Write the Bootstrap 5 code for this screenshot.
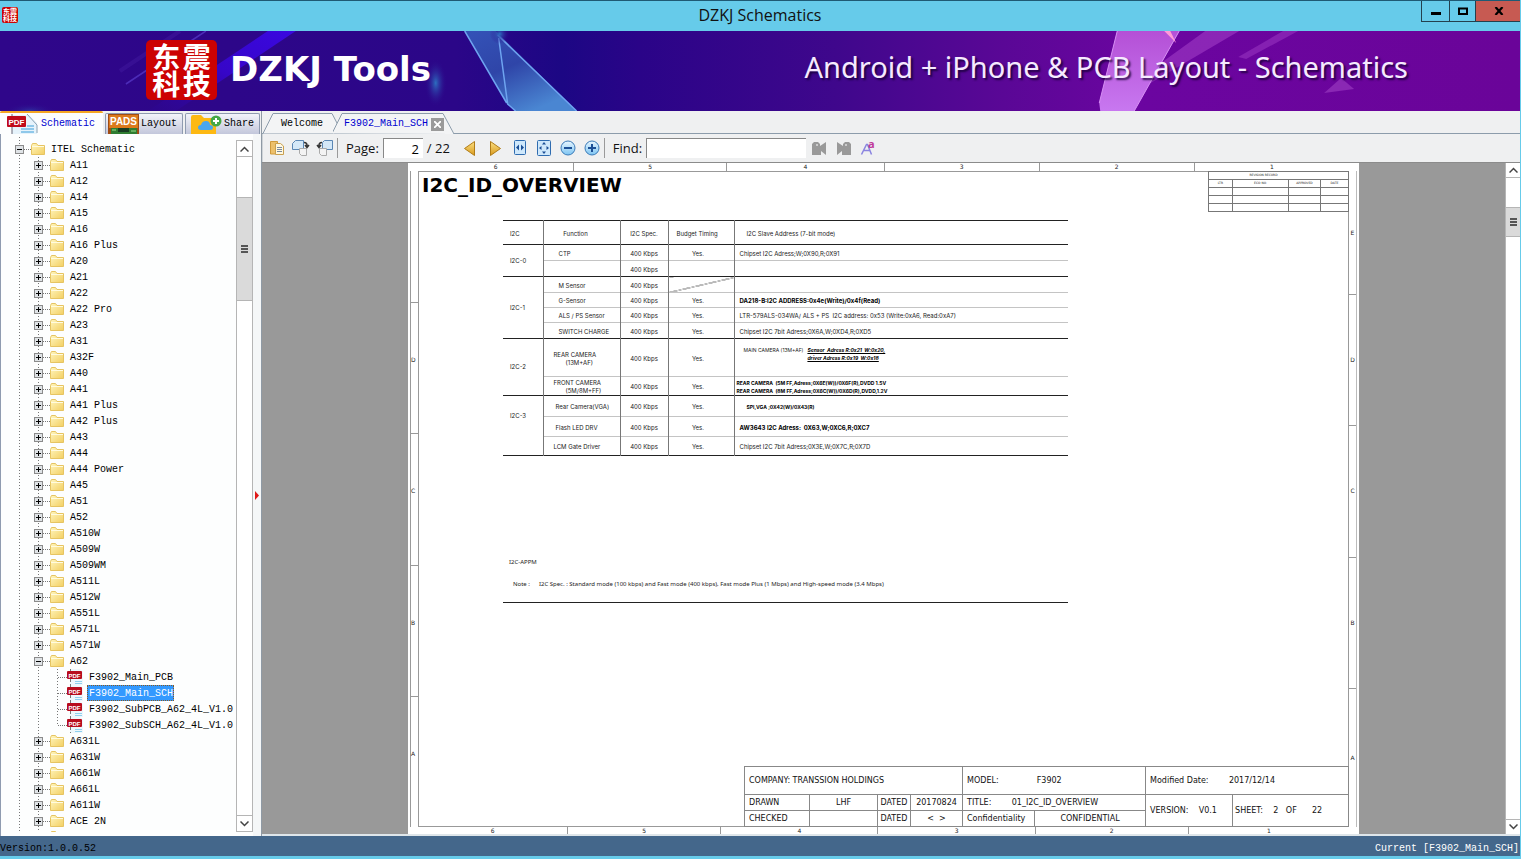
<!DOCTYPE html>
<html lang="en">
<head>
<meta charset="utf-8">
<meta name="viewport" content="width=device-width, initial-scale=1">
<title>DZKJ Schematics</title>
<link href="https://cdn.jsdelivr.net/npm/bootstrap@5.3.0/dist/css/bootstrap.min.css" rel="stylesheet">
<style>
  body { font-family: "Liberation Mono", "Noto Sans CJK SC", monospace; font-size: 10px; line-height: 16px; color: #000; background: #eff0f1; }
  button { border: 0; background: none; padding: 0; color: inherit; font: inherit; }
  a { color: inherit; text-decoration: none; }
  svg { display: block; flex: none; }
  .app { height: 100vh; border-right: 1px solid #66cbea; border-bottom: 3px solid #66cbea; }

  /* window title */
  .titlebar { display: grid; grid-template-columns: 1fr auto 1fr; height: 31px; background: #66cbea; border-top: 1px solid #1f5a74; }
  .titlebar h1 { font: 16px/28px "Open Sans", "Noto Sans", sans-serif; margin: 0; color: #111; }
  .seal { display: grid; grid-template-columns: 1fr 1fr; background: #cc0202; color: #fff; font-family: "Noto Sans CJK SC", sans-serif; font-weight: 700; text-align: center; }
  .seal-sm { width: 16px; height: 16px; margin: 6px 2px; border-radius: 2px; font-size: 7px; line-height: 7px; padding: 1px; }
  .seal-lg { width: 71px; height: 60px; border-radius: 5px; font-size: 28px; line-height: 26px; padding: 3px 5px; margin-bottom: 2px; }
  .winbtn { height: 21px; width: 28px; border: 1px solid #24404e; border-top: 0; border-right: 0; display: grid; place-items: center; }
  .winbtn.close-win { width: 46px; background: #c75a52; margin-right: -1px; }
  .winbtn.max { width: 26px; }

  /* banner */
  .banner { height: 80px; position: relative; background: #2d0689; color: #fff; padding-left: 146px; padding-right: 112px; overflow: hidden; }
  .banner > svg { position: absolute; inset: 0; width: 100%; height: 100%; }
  .banner > :not(svg) { position: relative; }
  .brand-name { font: 700 34px/40px "DejaVu Sans", sans-serif; margin-left: 13px; margin-bottom: 4px; white-space: nowrap; }
  .tagline { font: 29px/40px "Noto Sans", sans-serif; text-shadow: 2px 2px 2px rgba(20,0,50,.8); color: #f6eaff; margin-bottom: 8px; white-space: nowrap; }

  /* left side */
  .side { width: 262px; border-right: 1px solid #8f9aa5; }
  .side-tabs { height: 23px; }
  .side-tab { height: 21px; padding: 0 5px 0 2px; gap: 2px; border: 1px solid #8f9bb0; border-bottom: 0; background: linear-gradient(#f3f4fa, #c3c7db); margin-right: 2px; border-radius: 2px 2px 0 0; line-height: 20px; }
  .side-tab.active { height: 23px; background: #fdfefe; border: 0; border-top: 2px solid #f5a623; color: #0000d0; padding: 0 8px 0 7px; gap: 3px; }
  .side-body { background: #fdfefe; min-height: 0; border-left: 1px solid #8f9bb0; }
  .tree-pane { margin: 3px 0 4px; padding-top: 4px; overflow: hidden; min-width: 0; background: repeating-linear-gradient(#777 0 1px, transparent 1px 3px) 18px 0 / 1px 100% no-repeat; }
  .tree-pane ul { list-style: none; margin: 0; padding: 0; }
  .node { height: 16px; display: flex; align-items: center; white-space: nowrap; }
  .node .dots { height: 1px; width: 7px; flex: none; background: repeating-linear-gradient(90deg, #777 0 1px, transparent 1px 2px); }
  .lvl0 { padding-left: 14px; }
  .lvl1 { padding-left: 33px; }
  .lvl2 { padding-left: 57px; }
  .lvl2 .dots { width: 9px; }
  .line1 { background: repeating-linear-gradient(#777 0 1px, transparent 1px 3px) 37px 0 / 1px 100% no-repeat; }
  .line2 { background: repeating-linear-gradient(#777 0 1px, transparent 1px 3px) 56px 0 / 1px 56px no-repeat; }
  .exp { width: 9px; height: 9px; border: 1px solid #8b8b8b; background: linear-gradient(#000,#000) center/5px 1px no-repeat, #dfe3e6; flex: none; }
  .exp.plus { background: linear-gradient(#000,#000) center/5px 1px no-repeat, linear-gradient(#000,#000) center/1px 5px no-repeat, #dfe3e6; }
  .node a { margin-left: 5px; padding: 0 1px; height: 16px; line-height: 18px; }
  .lvl2 a { margin-left: 4px; padding-left: 2px; }
  .node a.sel { background: #3399ff; color: #fff; outline: 1px dotted #8a5a20; outline-offset: -1px; }
  .vscroll { width: 17px; border: 1px solid #b5b5b5; background: #fff; margin: 6px 0 4px; }
  .vscroll .arr { height: 16px; width: 100%; display: grid; place-items: center; flex: none; }
  .vscroll .arr.up { border-bottom: 1px solid #b5b5b5; }
  .vscroll .arr.down { border-top: 1px solid #b5b5b5; }
  .vscroll.doc { width: 15px; margin: 0; border-width: 0 0 0 1px; }
  .vscroll.doc .arr { height: 15px; }
  .thumb { background: #dadada; border-top: 1px solid #b5b5b5; border-bottom: 1px solid #b5b5b5; display: grid; place-items: center; width: 100%; }
  .grip { width: 7px; height: 8px; background: repeating-linear-gradient(#555 0 2px, transparent 2px 3px); }
  .split { width: 8px; background: #f5f7f8; display: grid; align-items: center; padding: 20px 0 0 1px; }

  /* document tabs and tool bar */
  .doc-tabs { height: 23px; border-bottom: 1px solid #8c9cab; }
  .doc-tab { position: relative; height: 23px; display: flex; align-items: center; padding-top: 3px; text-align: left; white-space: nowrap; }
  .doc-tab svg.edge { position: absolute; left: 0; top: 1px; }
  .doc-tab span, .doc-tab .x { position: relative; }
  .doc-tab .x { width: 13px; height: 13px; background: #9a9a9a; display: grid; place-items: center; margin-left: 3px; }
  .tab-welcome { width: 71px; padding-left: 19px; }
  .tab-file { width: 122px; padding-left: 11px; color: #0000d0; }
  .tools { height: 28px; padding-left: 6px; font: 13px/20px "Open Sans", "Noto Sans", sans-serif; color: #111; border-left: 1px solid #cfd4d8; }
  .tools .icon-btn { width: 24px; height: 24px; display: grid; place-items: center; flex: none; }
  .tools .wide { width: 26px; }
  .tools .slim { width: 16px; }
  .vsep { width: 1px; height: 20px; background: #9a9a9a; }
  .field { height: 20px; border: 0; border-top: 1px solid #888; border-left: 1px solid #888; background: #fff; padding: 0 4px; font: inherit; text-align: right; border-radius: 0; }
  .field-page { width: 40px; }
  .field-find { width: 160px; text-align: left; }

  /* document */
  .viewer { background: #999; border-top: 1px solid #8b8b8b; min-height: 0; overflow: hidden; }
  .sheet { width: 951px; background: #fff; color: #222; font: 6px/8px "DejaVu Sans", sans-serif; display: grid; grid-template-columns: 10px 1fr 10px; grid-template-rows: 8px 1fr 7px; }
  .rule { display: grid; min-height: 0; text-align: center; }
  .rule i { font-style: normal; border: 0 solid #999; display: grid; place-items: center; }
  .rule.top { grid-template-columns: 155fr 153fr 157fr 155fr 155fr 155fr; }
  .rule.bottom { grid-template-columns: 149fr 153fr 157fr 157fr 153fr 161fr; }
  .rule.left { grid-template-rows: 131fr 131fr 131fr 131fr 131fr; margin-left: 2px; border-left: 1px solid #999; }
  .rule.right { grid-template-rows: 123fr 131fr 131fr 131fr 139fr; margin-right: 2px; border-right: 1px solid #bbb; }
  .rule.left i { padding-bottom: 16px; justify-items: start; }
  .rule.top i + i, .rule.bottom i + i { border-left-width: 1px; }
  .rule.left i + i, .rule.right i + i { border-top-width: 1px; }
  .frame { border: 1px solid #999; }
  .frame h2 { font: 700 20px/24px "DejaVu Sans", sans-serif; color: #000; margin: 1px 0 0 3px; }
  .sheet table { border-collapse: collapse; table-layout: fixed; }
  .sheet td, .sheet th { font-weight: 400; padding: 0; overflow: hidden; white-space: nowrap; }
  .rev { width: 140px; font-size: 3px; line-height: 5px; margin: -1px -1px 0 0; }
  .rev td, .rev th { border: 1px solid #777; height: 8px; text-align: center; }
  .rev .cap { padding-right: 30px; }
  .i2c { width: 565px; margin: 8px 0 0 84px; font-family: Inter, "Noto Sans", sans-serif; border-bottom: 1px solid #222; }
  .i2c tr { border-top: 1px solid #c4c4c4; }
  .i2c tr.sec, .i2c th[scope=rowgroup] { border-top: 1px solid #222; }
  .i2c td, .i2c thead th { border-left: 1px solid #777; }
  .i2c tbody td { padding-top: 2px; }
  .i2c thead th:first-child { border-left: 0; }
  .i2c th { text-align: left; padding-left: 7px; }
  .i2c thead th { padding-top: 3px; }
  .i2c thead .mid { padding-left: 0; text-align: center; }
  .i2c thead .fnh { padding-right: 12px; }
  .i2c thead .late { padding-left: 12px; }
  .i2c thead .bt { padding-left: 8px; }
  .i2c .fn { padding-left: 12px; }
  .i2c .fn1 { padding-left: 15px; }
  .i2c .fn2 { padding-left: 10px; }
  .i2c .fn2 span { padding-left: 12px; }
  .i2c .sp { text-align: center; }
  .i2c .yes { text-align: center; padding-right: 6px; }
  .i2c .ad { padding-left: 5px; }
  .i2c tbody .in1 { padding: 7px 0 0 9px; vertical-align: top; font-size: 5px; }
  .i2c tbody .in0 { padding: 2px 0 0 2px; font-size: 5px; font-weight: 700; color: #000; }
  .i2c tbody .in2 { padding-left: 12px; }
  .i2c .strong { font-weight: 700; color: #000; }
  .diag { background: linear-gradient(to bottom right, transparent 49%, #777 49%, #777 52%, transparent 52%); }
  .note { margin-left: 90px; font-family: "Noto Sans", sans-serif; }
  .note-end { border-bottom: 1px solid #222; width: 565px; margin-left: 84px; height: 15px; }
  .tblock { width: 605px; font-size: 8px; line-height: 10px; margin: 0 -1px -1px 0; color: #111; }
  .tblock td { border: 1px solid #888; padding: 0 4px; height: 16px; white-space: pre; }
  .tblock tr:first-child td { height: 28px; }

  .under { height: 2px; background: #dfe6ea; }
  .status { height: 20px; background: #44678b; line-height: 14px; padding-right: 1px; color: #fff; }
  .status .ver { color: #000; }
</style>
</head>
<body>

<svg width="0" height="0" class="position-absolute" aria-hidden="true">
  <defs>
    <linearGradient id="gFold" x1="0" y1="0" x2="1" y2="1"><stop offset="0" stop-color="#fff6bf"/><stop offset="1" stop-color="#f3cf62"/></linearGradient>
    <linearGradient id="gGold" x1="0" y1="0" x2="0" y2="1"><stop offset="0" stop-color="#fbe084"/><stop offset="1" stop-color="#d99a1c"/></linearGradient>
    <linearGradient id="gBlue" x1="0" y1="0" x2="0" y2="1"><stop offset="0" stop-color="#e8f6ff"/><stop offset="1" stop-color="#7cc4f2"/></linearGradient>
    <symbol id="folder" viewBox="0 0 14 13"><path d="M.5 2.500V11.500H13.500V2.500H7L5.500.5H1.500Z" fill="url(#gFold)" stroke="#e6c462"/><path d="M1 3.500H13" stroke="#fffbe0"/></symbol>
    <symbol id="pdf" viewBox="0 0 16 16"><path d="M3 0h10l3 3v13H3z" fill="#eef7fc"/><path d="M3.500 0v16" stroke="#777" stroke-dasharray="3 2"/><path d="M8 12.500h7M8 14.500h7" stroke="#8fd0ee"/><rect y="2" width="15" height="8" rx="1" fill="#b80d1e"/><text x="7.500" y="8.500" font-family="Liberation Sans" font-weight="700" font-size="6" fill="#fff" text-anchor="middle">PDF</text></symbol>
  </defs>
</svg>

<div class="app d-flex flex-column overflow-hidden">
  <header class="titlebar flex-shrink-0">
    <div class="seal seal-sm" aria-hidden="true"><span>东</span><span>震</span><span>科</span><span>技</span></div>
    <h1>DZKJ Schematics</h1>
    <div class="d-flex justify-content-end">
      <button class="winbtn" aria-label="Minimize"><svg width="12" height="10"><path d="M1 7.500h10" stroke="#000" stroke-width="3"/></svg></button>
      <button class="winbtn max" aria-label="Maximize"><svg width="10" height="8"><path d="M1 1.500h8v5.500h-8z" fill="none" stroke="#000" stroke-width="2"/></svg></button>
      <button class="winbtn close-win" aria-label="Close"><svg width="10" height="8"><path d="M1.500 0l7 8M8.500 0l-7 8" stroke="#000" stroke-width="2.200"/></svg></button>
    </div>
  </header>

  <div class="banner d-flex align-items-center flex-shrink-0">
    <svg viewBox="0 0 1521 80" preserveAspectRatio="none" aria-hidden="true">
      <defs>
        <linearGradient id="bg"><stop offset="0" stop-color="#2f068a"/><stop offset=".3" stop-color="#2b0688"/><stop offset=".37" stop-color="#1c0784"/><stop offset=".42" stop-color="#2a0488"/><stop offset=".55" stop-color="#3f078c"/><stop offset=".66" stop-color="#5a0796"/><stop offset=".75" stop-color="#6b05a0"/><stop offset="1" stop-color="#6a0499"/></linearGradient>
        <linearGradient id="shard" x1="0" y1="0" x2=".6" y2="1"><stop offset="0" stop-color="#3453b8"/><stop offset=".5" stop-color="#2f45a8"/><stop offset="1" stop-color="#4a86d2"/></linearGradient>
        <linearGradient id="pink" x1="0" y1="0" x2="0" y2="1"><stop offset="0" stop-color="#b450d6"/><stop offset="1" stop-color="#c878f0"/></linearGradient>
        <linearGradient id="band" x1="1" y1="0" x2="0" y2="1"><stop offset="0" stop-color="#3a08e0"/><stop offset=".5" stop-color="#3606c8"/><stop offset="1" stop-color="#2d0690" stop-opacity=".3"/></linearGradient>
        <radialGradient id="glow"><stop offset="0" stop-color="#2d6ec0"/><stop offset="1" stop-color="#2d0689" stop-opacity="0"/></radialGradient>
      </defs>
      <rect width="1521" height="80" fill="url(#bg)"/>
      <path d="M268 0h28L176 80h-28z" fill="url(#band)"/>
      <path d="M206 0l-80 53" stroke="#5a3ccc" stroke-width="1.500" opacity=".7"/>
      <path d="M180 0l-60 40" stroke="#4a22a8" stroke-width="4" opacity=".35"/>
      <ellipse cx="436" cy="52" rx="11" ry="24" fill="url(#glow)"/>
      <ellipse cx="30" cy="80" rx="26" ry="8" fill="url(#glow)" opacity=".4"/>
      <path d="M465 0h31l81 80h-62l-8-8z" fill="url(#shard)"/>
      <path d="M465 0l42 72M499 7l9 66 8 7M498 4l79 76" stroke="#6ea4f0" stroke-width="1.500" fill="none"/>
      <circle cx="500" cy="3" r="10" fill="url(#glow)"/>
      <path d="M1206 0h34l-92 54-14-2z" fill="#a03cc6" opacity=".6"/>
      <path d="M1284 0h15l-52 28-8-2z" fill="#a03cc6" opacity=".5"/>
      <path d="M1118 0h62l-45 80h-34l-1-8z" fill="url(#pink)"/>
      <path d="M1118 0l-18 72M1180 0l-45 80" stroke="#d890f4" fill="none"/>
      <path d="M1165 0l12 12-6-12z" fill="#ff9ad8"/>
      <path d="M1325 62l17-15 13 11z" fill="#8a28b4"/>
    </svg>
    <div class="seal seal-lg"><span>东</span><span>震</span><span>科</span><span>技</span></div>
    <div class="brand-name">DZKJ Tools</div>
    <div class="tagline ms-auto">Android + iPhone &amp; PCB Layout - Schematics</div>
  </div>

  <main class="d-flex flex-grow-1 overflow-hidden">
    <aside class="side d-flex flex-column flex-shrink-0">
      <div class="side-tabs d-flex align-items-end" role="tablist">
        <button class="side-tab active d-flex align-items-center" role="tab" aria-selected="true">
          <svg width="31" height="20" viewBox="0 0 31 20"><path d="M5 1h17l8 8v11H5z" fill="#e6f3fb"/><path d="M20 0l10 11v8" fill="none" stroke="#8aa0b0"/><path d="M5 13v7M5 3V0" stroke="#667"/><path d="M14 15h13M14 18h13M20 12h7" stroke="#8fc8ea" stroke-width="2"/><rect y="2" width="19" height="11" rx="1" fill="#c00a1a"/><text x="9.500" y="11" font-family="Liberation Sans" font-weight="700" font-size="8" fill="#fff" text-anchor="middle">PDF</text></svg>
          Schematic</button>
        <button class="side-tab d-flex align-items-center" role="tab">
          <svg width="31" height="20" viewBox="0 0 31 20"><path d="M0 0h31v20H0z" fill="#a04c14"/><path d="M1 1h29v13H1z" fill="#dc7a1c"/><text x="15.500" y="11" font-family="Liberation Sans" font-weight="700" font-size="10" fill="#fff" text-anchor="middle">PADS</text><path d="M3 14h26v6H3z" fill="#2f7d32"/><path d="M10 14h11v4H10z" fill="#183c22"/><path d="M4 16h4M23 17h5" stroke="#9be08a"/></svg>
          Layout</button>
        <button class="side-tab d-flex align-items-center" role="tab">
          <svg width="34" height="20" viewBox="0 0 34 20"><path d="M3 20V3q0-2 2-2h8l3 3h9q3 0 3 3v13z" fill="#fdb913"/><path d="M13 16q-3 0-3-2.500t3-2.500q1-4 5-4t4 4q3 0 3 2.500T22 16z" fill="#4aa6ee"/><circle cx="28" cy="7" r="5.500" fill="#45a847"/><path d="M28 4v6M25 7h6" stroke="#fff" stroke-width="2"/></svg>
          Share</button>
      </div>
      <div class="side-body d-flex flex-grow-1">
        <nav class="tree-pane flex-grow-1" aria-label="Schematics">
          <div class="node lvl0"><button class="exp" aria-label="Collapse"></button><span class="dots"></span><svg width="14" height="13"><use href="#folder"/></svg><a href="#">ITEL Schematic</a></div>
          <ul class="line1" id="tree"></ul>
        </nav>
        <div class="vscroll d-flex flex-column flex-shrink-0">
          <button class="arr up" aria-label="Scroll up"><svg width="9" height="6"><path d="M.5 5.500l4-4 4 4" fill="none" stroke="#444" stroke-width="1.500"/></svg></button>
          <div style="flex:40"></div>
          <div class="thumb" style="flex:102"><span class="grip"></span></div>
          <div style="flex:516"></div>
          <button class="arr down" aria-label="Scroll down"><svg width="9" height="6"><path d="M.5 .5l4 4 4-4" fill="none" stroke="#444" stroke-width="1.500"/></svg></button>
        </div>
        <div class="split flex-shrink-0"><svg width="6" height="9"><path d="M1 0l4 4.500L1 9z" fill="#e01818"/></svg></div>
      </div>
    </aside>

    <section class="d-flex flex-column flex-grow-1 overflow-hidden">
      <div class="doc-tabs d-flex flex-shrink-0" role="tablist">
        <button class="doc-tab tab-welcome" role="tab"><svg class="edge" width="80" height="22"><path d="M1 21.500L11 1.500H70L76 13L72 21.500" fill="#f3f4f5" stroke="#8c9cab"/></svg><span>Welcome</span></button>
        <button class="doc-tab tab-file" role="tab" aria-selected="true"><svg class="edge" width="124" height="22"><path d="M-1 21.500L9 1.500H110L121 22" fill="#f3f4f5" stroke="#8c9cab"/></svg><span>F3902_Main_SCH</span><i class="x"><svg width="7" height="7"><path d="M0 0l7 7M7 0L0 7" stroke="#fff" stroke-width="1.800"/></svg></i></button>
      </div>

      <div class="tools d-flex align-items-center flex-shrink-0">
        <button class="icon-btn slim" aria-label="Contents"><svg width="16" height="16"><path d="M1.500 1.500h7v12.500h-7z" fill="#edc06a" stroke="#d09a3c"/><path d="M6.500 3.500h5l3 2.500v8.500h-8z" fill="#fff8e0" stroke="#c9a050"/><path d="M8 7.500h5M8 9.500h5M8 11.500h5" stroke="#7a8aa0"/></svg></button>
        <button class="icon-btn ms-1" aria-label="Rotate right"><svg width="18" height="16"><path d="M3.500 .5h8v9h-11v-6z" fill="#d4e8f8" stroke="#5b87b4"/><path d="M7.500 8.500h7v7h-5l-2-2z" fill="#f3f3f3" stroke="#aaa"/><path d="M12 2.500q3.500 0 3 4M13 5l2 2.500L17 5" fill="none" stroke="#333" stroke-width="1.500"/></svg></button>
        <button class="icon-btn" aria-label="Rotate left"><svg width="18" height="16"><path d="M8.500 .5h8v9h-10v-7z" fill="#d4e8f8" stroke="#5b87b4"/><path d="M3.500 8.500h7v7h-5l-2-2z" fill="#f3f3f3" stroke="#aaa"/><path d="M6 2.500q-3.500 0-3 4M1 5l2 2.500L5 5" fill="none" stroke="#333" stroke-width="1.500"/></svg></button>
        <span class="vsep"></span>
        <label for="page" class="ms-2">Page:</label>
        <input id="page" class="field field-page ms-1" value="2">
        <span class="ms-1">/ 22</span>
        <button class="icon-btn ms-2" aria-label="Previous page"><svg width="14" height="16"><path d="M11.500 1.500v14L1.500 8.500z" fill="url(#gGold)" stroke="#b07c18" stroke-linejoin="round"/></svg></button>
        <button class="icon-btn wide" aria-label="Next page"><svg width="14" height="16"><path d="M2.500 1.500v14l10-7z" fill="url(#gGold)" stroke="#b07c18" stroke-linejoin="round"/></svg></button>
        <button class="icon-btn" aria-label="Fit width"><svg width="14" height="16"><rect x="1.500" y=".5" width="11" height="14" rx="1" fill="#cfe8fb" stroke="#2f6cb0"/><path d="M6 4.500v6L3 7.500zM8 4.500v6l3-3z" fill="#1c4f96"/></svg></button>
        <button class="icon-btn" aria-label="Fit page"><svg width="14" height="16"><rect x=".5" y=".5" width="13" height="15" rx="1" fill="#cfe8fb" stroke="#2f6cb0"/><path d="M7 2l2 2.500H5zM7 14l2-2.500H5zM2 8l2.500-2v4zM12 8L9.500 6v4z" fill="#1c4f96"/></svg></button>
        <button class="icon-btn" aria-label="Zoom out"><svg width="16" height="16"><circle cx="8" cy="8" r="7" fill="url(#gBlue)" stroke="#3b7bb8"/><path d="M4 8h8" stroke="#1c4f96" stroke-width="2"/></svg></button>
        <button class="icon-btn" aria-label="Zoom in"><svg width="16" height="16"><circle cx="8" cy="8" r="7" fill="url(#gBlue)" stroke="#3b7bb8"/><path d="M4 8h8M8 4v8" stroke="#1c4f96" stroke-width="2"/></svg></button>
        <span class="vsep"></span>
        <label for="find" class="ms-2">Find:</label>
        <input id="find" class="field field-find ms-1">
        <button class="icon-btn wide" aria-label="Find previous"><svg width="16" height="15"><path d="M1 3l2-2h4l2 2v2l6-4v13l-5-4v4H1z" fill="#999"/><circle cx="6" cy="4" r="1" fill="#ddd"/></svg></button>
        <button class="icon-btn" aria-label="Find next"><svg width="16" height="15"><path d="M15 3l-2-2H9L7 3v2L1 1v13l5-4v4h9z" fill="#999"/><circle cx="10" cy="4" r="1" fill="#ddd"/></svg></button>
        <button class="icon-btn" aria-label="Match case"><svg width="18" height="18" overflow="visible"><path d="M2.500 15.500l5-10h1l4 10M5 11.500h6" fill="none" stroke="#8a84e0" stroke-width="1.500"/><text x="9" y="9" font-family="Open Sans" font-weight="700" font-size="11" fill="#c0389a">a</text></svg></button>
      </div>

      <div class="viewer d-flex flex-grow-1">
        <div class="flex-grow-1 d-flex justify-content-center overflow-hidden">
          <article class="sheet">
            <span></span>
            <div class="rule top"><i>6</i><i>5</i><i>4</i><i>3</i><i>2</i><i>1</i></div>
            <span></span>
            <div class="rule left"><i></i><i>D</i><i>C</i><i>B</i><i>A</i></div>
            <div class="frame d-flex flex-column">
              <div class="d-flex justify-content-between align-items-start">
                <h2>I2C_ID_OVERVIEW</h2>
                <table class="rev">
                  <colgroup><col style="width:24px"><col style="width:56px"><col style="width:32px"><col style="width:28px"></colgroup>
                  <tr><th colspan="4" class="cap">REVISION RECORD</th></tr>
                  <tr><th>LTR</th><th>ECO NO.</th><th>APPROVED</th><th>DATE</th></tr>
                  <tr><td></td><td></td><td></td><td></td></tr>
                  <tr><td></td><td></td><td></td><td></td></tr>
                  <tr><td></td><td></td><td></td><td></td></tr>
                </table>
              </div>
              <table class="i2c">
                <colgroup><col style="width:40px"><col style="width:77px"><col style="width:48px"><col style="width:66px"><col></colgroup>
                <thead>
                  <tr class="sec" style="height:24px"><th>I2C</th><th class="mid fnh">Function</th><th class="mid">I2C Spec.</th><th class="bt">Budget Timing</th><th class="late">I2C Slave Address (7-bit mode)</th></tr>
                </thead>
                <tbody>
                  <tr class="sec" style="height:16px"><th rowspan="2" scope="rowgroup">I2C-0</th><td class="fn1">CTP</td><td class="sp">400 Kbps</td><td class="yes">Yes.</td><td class="ad">Chipset I2C Adress;W;0X90,R;0X91</td></tr>
                  <tr style="height:16px"><td></td><td class="sp">400 Kbps</td><td></td><td></td></tr>
                </tbody>
                <tbody>
                  <tr class="sec" style="height:16px"><th rowspan="4" scope="rowgroup">I2C-1</th><td class="fn1">M Sensor</td><td class="sp">400 Kbps</td><td class="diag"></td><td></td></tr>
                  <tr style="height:15px"><td class="fn1">G-Sensor</td><td class="sp">400 Kbps</td><td class="yes">Yes.</td><td class="ad strong">DA218-B:I2C ADDRESS:0x4e(Write)/0x4f(Read)</td></tr>
                  <tr style="height:15px"><td class="fn1">ALS / PS Sensor</td><td class="sp">400 Kbps</td><td class="yes">Yes.</td><td class="ad">LTR-579ALS-034WA/ ALS + PS&nbsp; I2C address: 0x53 (Write:0xA6, Read:0xA7)</td></tr>
                  <tr style="height:16px"><td class="fn1">SWITCH CHARGE</td><td class="sp">400 Kbps</td><td class="yes">Yes.</td><td class="ad">Chipset I2C 7bit Adress;0X6A,W;0XD4,R;0XD5</td></tr>
                </tbody>
                <tbody>
                  <tr class="sec" style="height:38px"><th rowspan="2" scope="rowgroup">I2C-2</th><td class="fn2">REAR CAMERA<br><span>(13M+AF)</span></td><td class="sp">400 Kbps</td><td class="yes">Yes.</td><td class="in1"><div class="d-flex gap-1"><span>MAIN CAMERA (13M+AF)</span><span class="strong fst-italic text-decoration-underline">Sensor&nbsp; Adress R:0x21&nbsp; W:0x20,<br>driver Adress R:0x19&nbsp; W:0x18</span></div></td></tr>
                  <tr style="height:19px"><td class="fn2">FRONT CAMERA<br><span>(5M/8M+FF)</span></td><td class="sp">400 Kbps</td><td class="yes">Yes.</td><td class="in0">REAR CAMERA&nbsp; (5M FF,Adress;0X6E(W))/0X6F(R),DVDD 1.5V<br>REAR CAMERA&nbsp; (8M FF,Adress;0X6C(W))/0X6D(R),DVDD,1.2V</td></tr>
                </tbody>
                <tbody>
                  <tr class="sec" style="height:21px"><th rowspan="3" scope="rowgroup" class="align-top pt-3">I2C-3</th><td class="fn">Rear Camera(VGA)</td><td class="sp">400 Kbps</td><td class="yes">Yes.</td><td class="in0 in2">SPI,VGA ;0X42(W)/0X43(R)</td></tr>
                  <tr style="height:20px"><td class="fn">Flash LED DRV</td><td class="sp">400 Kbps</td><td class="yes">Yes.</td><td class="ad strong">AW3643 I2C Adress:&nbsp; 0X63,W;0XC6,R;0XC7</td></tr>
                  <tr style="height:19px"><td class="fn2">LCM Gate Driver</td><td class="sp">400 Kbps</td><td class="yes">Yes.</td><td class="ad">Chipset I2C 7bit Adress;0X3E,W;0X7C,R;0X7D</td></tr>
                </tbody>
              </table>
              <div class="note" style="margin-top:102px">I2C-APPM</div>
              <div class="note d-flex" style="margin-top:14px;gap:9px"><span class="ps-1">Note :</span><span>I2C Spec. : Standard mode (100 kbps) and Fast mode (400 kbps), Fast mode Plus (1 Mbps) and High-speed mode (3.4 Mbps)</span></div>
              <div class="note-end"></div>
              <table class="tblock mt-auto ms-auto">
                <colgroup><col style="width:65px"><col style="width:68px"><col style="width:33px"><col style="width:52px"><col style="width:72px"><col style="width:111px"><col style="width:87px"><col></colgroup>
                <tr><td colspan="4">COMPANY: TRANSSION HOLDINGS</td><td colspan="2">MODEL:               F3902</td><td colspan="2">Modified Date:        2017/12/14</td></tr>
                <tr><td>DRAWN</td><td class="text-center">LHF</td><td class="px-0 text-center">DATED</td><td class="px-0 text-center">20170824</td><td colspan="2">TITLE:        01_I2C_ID_OVERVIEW</td><td rowspan="2">VERSION:    V0.1</td><td rowspan="2" style="padding-left:2px">SHEET:    2   OF      22</td></tr>
                <tr><td>CHECKED</td><td></td><td class="px-0 text-center">DATED</td><td class="text-center">&lt;  &gt;</td><td>Confidentiality</td><td class="text-center">CONFIDENTIAL</td></tr>
              </table>
            </div>
            <div class="rule right"><i>E</i><i>D</i><i>C</i><i>B</i><i>A</i></div>
            <span></span>
            <div class="rule bottom"><i>6</i><i>5</i><i>4</i><i>3</i><i>2</i><i>1</i></div>
            <span></span>
          </article>
        </div>
        <div class="vscroll doc d-flex flex-column flex-shrink-0">
          <button class="arr up" aria-label="Page up"><svg width="9" height="6"><path d="M.5 5.500l4-4 4 4" fill="none" stroke="#444" stroke-width="1.500"/></svg></button>
          <div style="flex:29"></div>
          <div class="thumb" style="flex:28"><span class="grip"></span></div>
          <div style="flex:585"></div>
          <button class="arr down" aria-label="Page down"><svg width="9" height="6"><path d="M.5 .5l4 4 4-4" fill="none" stroke="#444" stroke-width="1.500"/></svg></button>
        </div>
      </div>
      <div class="under"></div>
    </section>
  </main>

  <footer class="status d-flex justify-content-between align-items-end flex-shrink-0"><span class="ver">Version:1.0.0.52</span><span>Current [F3902_Main_SCH]</span></footer>
</div>

<script>
  const models = ["A11","A12","A14","A15","A16","A16 Plus","A20","A21","A22","A22 Pro","A23","A31","A32F","A40","A41","A41 Plus","A42 Plus","A43","A44","A44 Power","A45","A51","A52","A510W","A509W","A509WM","A511L","A512W","A551L","A571L","A571W","A62","A631L","A631W","A661W","A661L","A611W","ACE 2N",""];
  const files = { "A62": ["F3902_Main_PCB","F3902_Main_SCH","F3902_SubPCB_A62_4L_V1.0","F3902_SubSCH_A62_4L_V1.0"] };
  const selected = "F3902_Main_SCH";
  document.getElementById("tree").innerHTML = models.map(m => {
    const kids = files[m];
    const row = `<div class="node lvl1"><button class="exp ${kids ? "" : "plus"}" aria-label="${kids ? "Collapse" : "Expand"}"></button><span class="dots"></span><svg width="14" height="13"><use href="#folder"/></svg><a href="#">${m}</a></div>`;
    const sub = kids ? `<ul class="line2">${kids.map(f => `<li class="node lvl2"><span class="dots"></span><svg width="16" height="16"><use href="#pdf"/></svg><a href="#" class="${f === selected ? "sel" : ""}">${f}</a></li>`).join("")}</ul>` : "";
    return `<li>${row}${sub}</li>`;
  }).join("");
</script>
<script src="https://cdn.jsdelivr.net/npm/bootstrap@5.3.0/dist/js/bootstrap.bundle.min.js"></script>
</body>
</html>
